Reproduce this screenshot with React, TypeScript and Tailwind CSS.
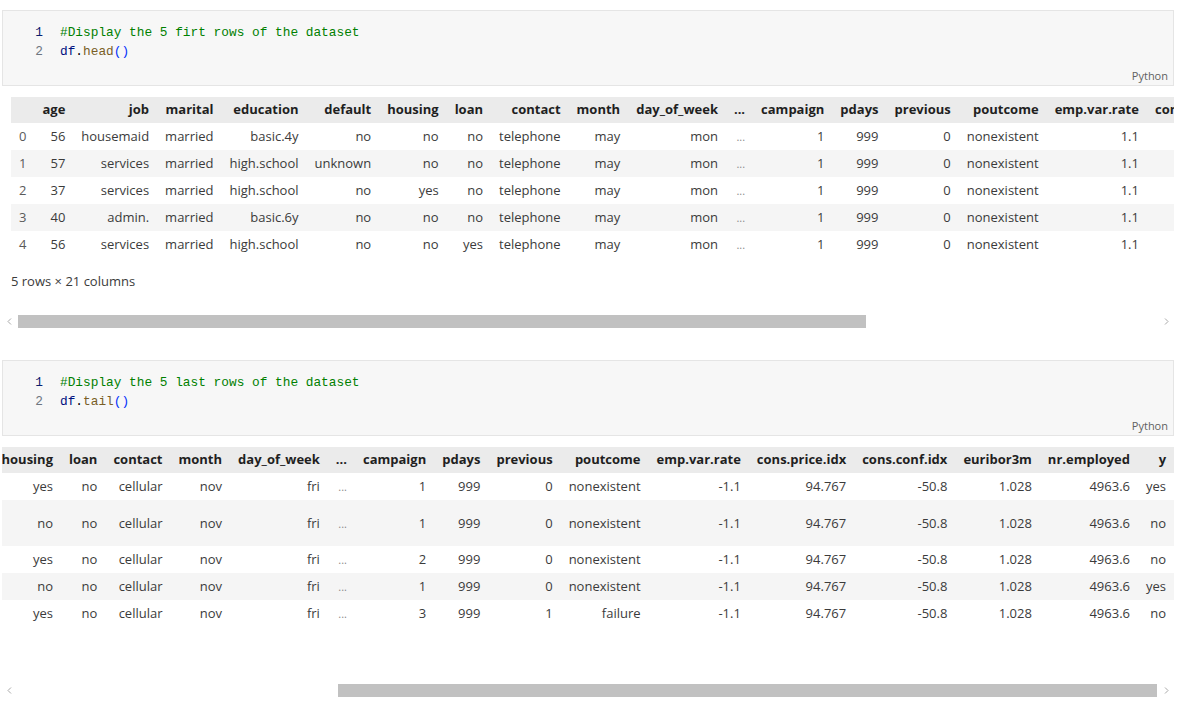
import { useLayoutEffect, useRef } from 'react';

const columns = [
  '', 'age', 'job', 'marital', 'education', 'default', 'housing', 'loan', 'contact', 'month',
  'day_of_week', '...', 'campaign', 'pdays', 'previous', 'poutcome', 'emp.var.rate',
  'cons.price.idx', 'cons.conf.idx', 'euribor3m', 'nr.employed', 'y',
];

const headRows = [
  ['0', '56', 'housemaid', 'married', 'basic.4y', 'no', 'no', 'no', 'telephone', 'may', 'mon', '...', '1', '999', '0', 'nonexistent', '1.1', '93.994', '-36.4', '4.857', '5191.0', 'no'],
  ['1', '57', 'services', 'married', 'high.school', 'unknown', 'no', 'no', 'telephone', 'may', 'mon', '...', '1', '999', '0', 'nonexistent', '1.1', '93.994', '-36.4', '4.857', '5191.0', 'no'],
  ['2', '37', 'services', 'married', 'high.school', 'no', 'yes', 'no', 'telephone', 'may', 'mon', '...', '1', '999', '0', 'nonexistent', '1.1', '93.994', '-36.4', '4.857', '5191.0', 'no'],
  ['3', '40', 'admin.', 'married', 'basic.6y', 'no', 'no', 'no', 'telephone', 'may', 'mon', '...', '1', '999', '0', 'nonexistent', '1.1', '93.994', '-36.4', '4.857', '5191.0', 'no'],
  ['4', '56', 'services', 'married', 'high.school', 'no', 'no', 'yes', 'telephone', 'may', 'mon', '...', '1', '999', '0', 'nonexistent', '1.1', '93.994', '-36.4', '4.857', '5191.0', 'no'],
];

const tailRows = [
  ['41183', '73', 'retired', 'married', 'professional.course', 'no', 'yes', 'no', 'cellular', 'nov', 'fri', '...', '1', '999', '0', 'nonexistent', '-1.1', '94.767', '-50.8', '1.028', '4963.6', 'yes'],
  ['41184', '46', 'blue-collar', 'married', 'professional.course', 'no', 'no', 'no', 'cellular', 'nov', 'fri', '...', '1', '999', '0', 'nonexistent', '-1.1', '94.767', '-50.8', '1.028', '4963.6', 'no'],
  ['41185', '56', 'retired', 'married', 'university.degree', 'no', 'yes', 'no', 'cellular', 'nov', 'fri', '...', '2', '999', '0', 'nonexistent', '-1.1', '94.767', '-50.8', '1.028', '4963.6', 'no'],
  ['41186', '44', 'technician', 'married', 'professional.course', 'no', 'no', 'no', 'cellular', 'nov', 'fri', '...', '1', '999', '0', 'nonexistent', '-1.1', '94.767', '-50.8', '1.028', '4963.6', 'yes'],
  ['41187', '74', 'retired', 'married', 'professional.course', 'no', 'yes', 'no', 'cellular', 'nov', 'fri', '...', '3', '999', '1', 'failure', '-1.1', '94.767', '-50.8', '1.028', '4963.6', 'no'],
];

function CodeCell({ comment, fn }: { comment: string; fn: string }) {
  return (
    <div className="border border-[#e5e5e5] bg-[#f7f7f7]">
      <div className="flex pt-[12px] font-['Liberation_Mono',monospace] text-[12.8px] leading-[19px]">
        <div className="w-[40px] shrink-0 text-right">
          <div className="text-[#0b216f]">1</div>
          <div className="text-[#6e7681]">2</div>
        </div>
        <div className="pl-[17px]">
          <div className="text-[#008000] whitespace-pre">{comment}</div>
          <div>
            <span className="text-[#001080]">df</span>
            <span className="text-[#000000]">.</span>
            <span className="text-[#795e26]">{fn}</span>
            <span className="text-[#0431fa]">()</span>
          </div>
        </div>
      </div>
      <div className="mt-[7px] pb-[2px] pr-[5px] text-right text-[11px] leading-[15px] text-[#616161]">
        Python
      </div>
    </div>
  );
}

function DataTable({ rows }: { rows: string[][] }) {
  return (
    <table className="border-collapse text-[13px] leading-[19px] text-[#3b3b3b]">
      <thead>
        <tr className="bg-[#ebebeb]">
          {columns.map((c, i) => (
            <th key={i} className="px-2 pt-[3px] pb-[4px] text-right font-bold text-[#1f1f1f] whitespace-nowrap">
              {c}
            </th>
          ))}
        </tr>
      </thead>
      <tbody>
        {rows.map((r, ri) => (
          <tr key={ri} className={ri % 2 === 1 ? 'bg-[#f5f5f5]' : 'bg-white'}>
            {r.map((v, ci) => (
              <td
                key={ci}
                className={
                  ci === 0
                    ? 'px-2 py-1 text-left text-[#5a5a5a]'
                    : v === '...'
                      ? 'px-2 py-1 text-right text-[#8a8a8a] text-[11px]'
                      : 'px-2 py-1 text-right'
                }
              >
                {v}
              </td>
            ))}
          </tr>
        ))}
      </tbody>
    </table>
  );
}

function Arrow({ dir }: { dir: 'left' | 'right' }) {
  return (
    <svg width="5" height="7" viewBox="0 0 5 7">
      {dir === 'left' ? (
        <path d="M4 0.5 L1 3.5 L4 6.5" fill="none" stroke="#a8a8a8" strokeWidth="1" />
      ) : (
        <path d="M1 0.5 L4 3.5 L1 6.5" fill="none" stroke="#a8a8a8" strokeWidth="1" />
      )}
    </svg>
  );
}

function ScrollBar({ left }: { left: boolean }) {
  return (
    <div className="flex h-[13px] items-center">
      <div className="flex w-[15px] justify-center">
        <Arrow dir="left" />
      </div>
      <div className="flex h-full flex-1 items-stretch">
        {left ? (
          <div className="ml-[1px] w-[848px] bg-[#c1c1c1]" />
        ) : (
          <div className="ml-[321px] w-[819px] bg-[#c1c1c1]" />
        )}
      </div>
      <div className="flex w-[15px] justify-center">
        <Arrow dir="right" />
      </div>
    </div>
  );
}

function Output({ rows, scrolled }: { rows: string[][]; scrolled: boolean }) {
  const ref = useRef<HTMLDivElement>(null);
  useLayoutEffect(() => {
    if (scrolled && ref.current) ref.current.scrollLeft = ref.current.scrollWidth;
  }, [scrolled]);

  return (
    <div className="mt-[11px]">
      <div ref={ref} className="overflow-x-hidden">
        <div className="pl-[9px]">
          <DataTable rows={rows} />
          <p className="mt-[14px] text-[13px] leading-[19px] text-[#3b3b3b] whitespace-nowrap">
            5 rows × 21 columns
          </p>
        </div>
      </div>
      <div className="mt-[24px]">
        <ScrollBar left={!scrolled} />
      </div>
    </div>
  );
}

export default function App() {
  return (
    <div className="w-[1178px] h-[709px] overflow-hidden bg-white px-[2px] pt-[10px] pr-[4px] font-['Open_Sans',sans-serif]">
      <CodeCell comment="#Display the 5 firt rows of the dataset" fn="head" />
      <Output rows={headRows} scrolled={false} />
      <div className="mt-[32px]">
        <CodeCell comment="#Display the 5 last rows of the dataset" fn="tail" />
        <Output rows={tailRows} scrolled={true} />
      </div>
    </div>
  );
}
